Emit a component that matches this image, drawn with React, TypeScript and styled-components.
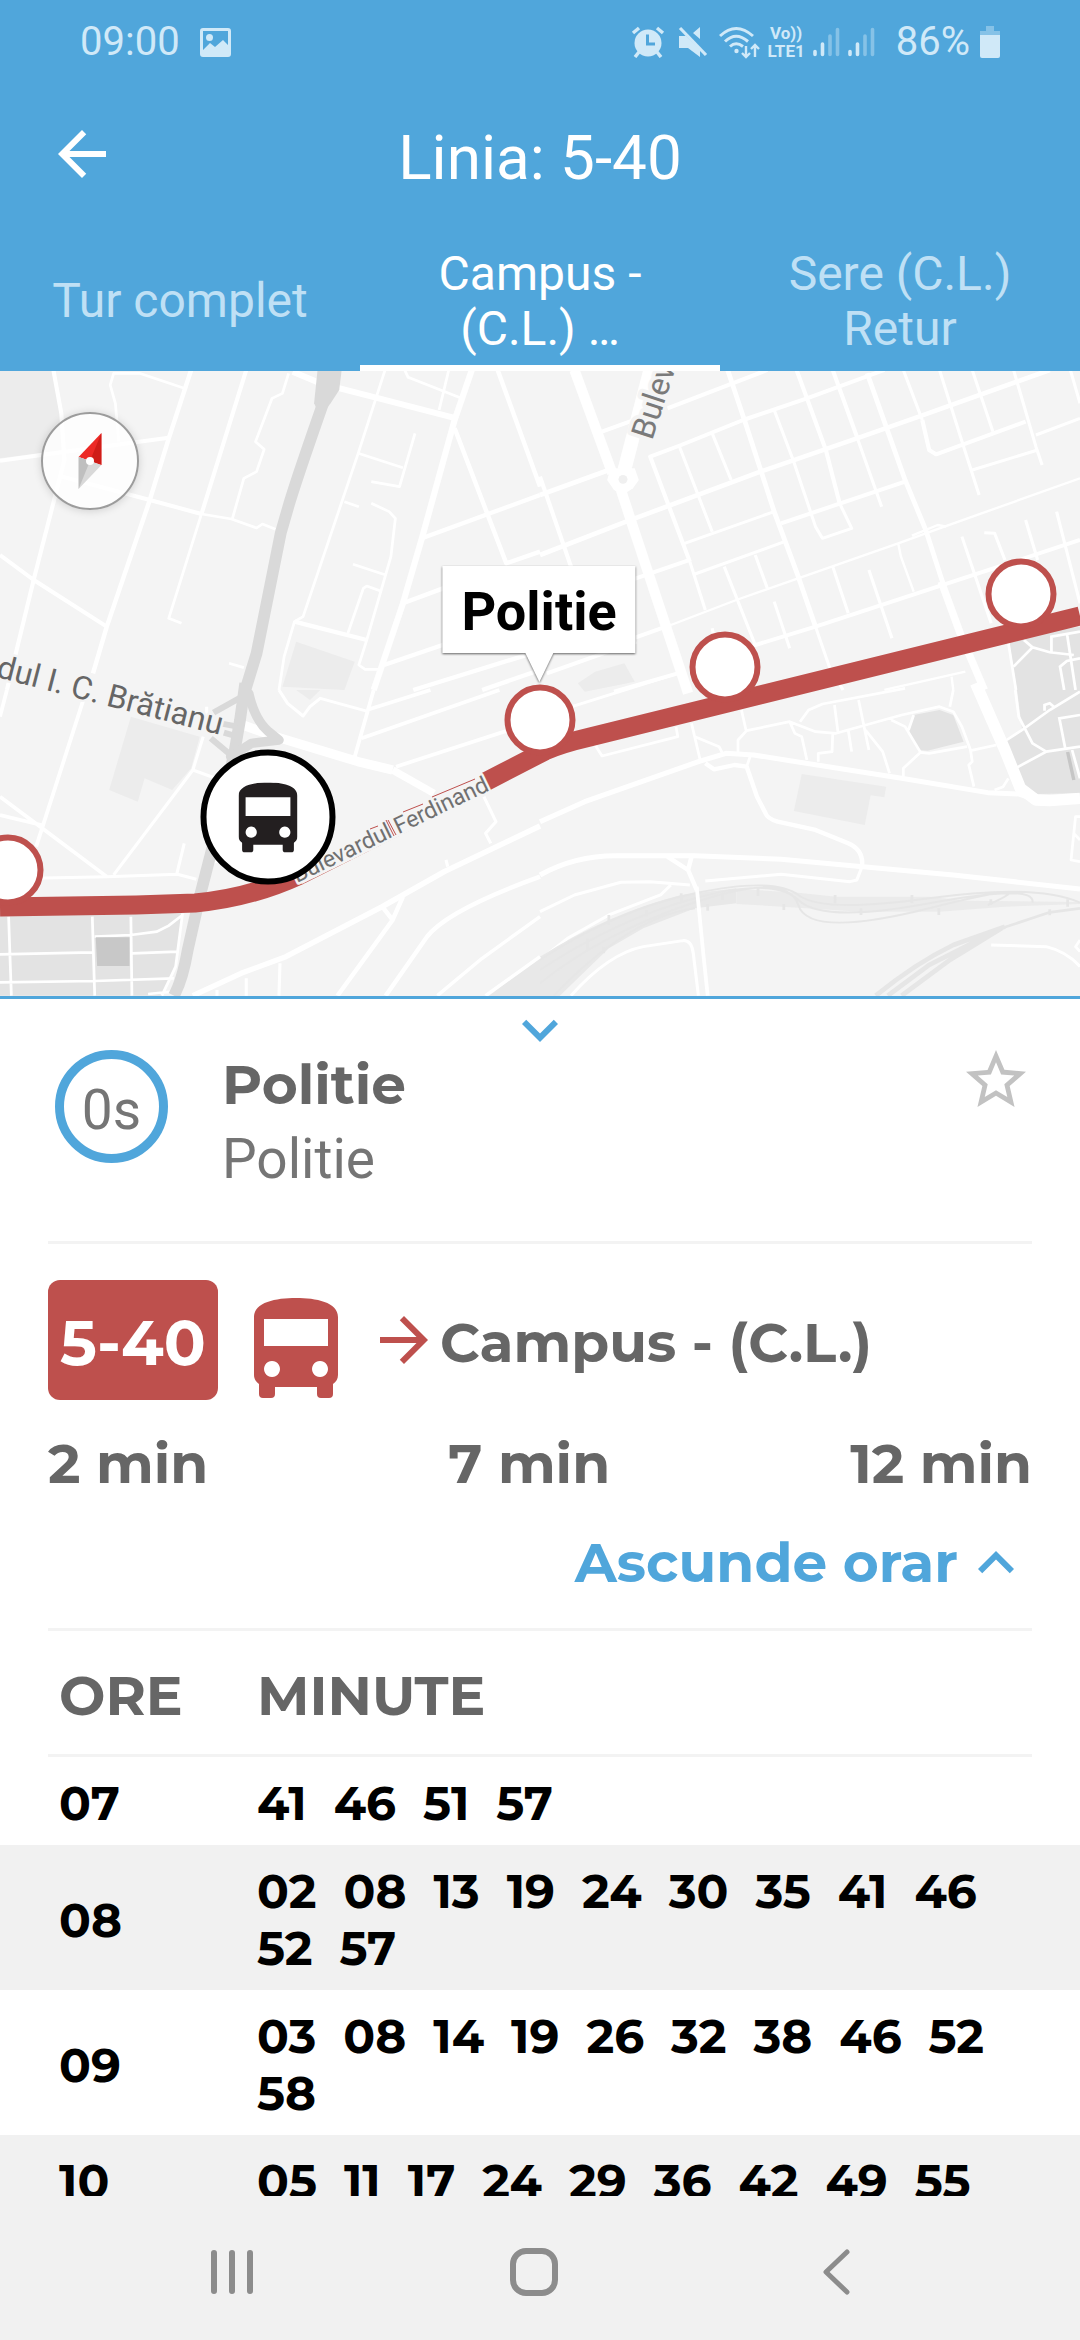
import React from "react";
import styled, { createGlobalStyle } from "styled-components";

const BLUE = "#50a6db";
const RED = "#be504d";
const GREY = "#666666";
const ICE = "#d0e9f8";
const MONT = `Montserrat, Inter, "Open Sans", sans-serif`;

const GlobalStyle = createGlobalStyle`
  *, *::before, *::after { box-sizing: border-box; }
  html, body { margin: 0; padding: 0; background: #fff; }
  body { font-family: Roboto, "Noto Sans", sans-serif; }
  button { margin: 0; padding: 0; border: 0; background: none; font: inherit; color: inherit; cursor: pointer; }
  h1, h2, p, ul { margin: 0; padding: 0; list-style: none; }
  svg { display: block; flex: none; }
`;

const Screen = styled.div`
  display: flex;
  flex-direction: column;
  height: 100vh;
  overflow: hidden;
  background: #fff;
`;

/* ---------- header ---------- */

const Header = styled.header`
  flex: none;
  background: ${BLUE};
  color: #fff;
`;

const StatusBar = styled.div`
  display: flex;
  align-items: center;
  height: 84px;
  padding: 0 80px;
  color: ${ICE};
  font-size: 40px;
  line-height: 48px;
`;

const Clock = styled.span`
  margin-right: 20px;
`;

const StatusIcons = styled.div`
  display: flex;
  align-items: center;
  gap: 8px;
  margin-left: auto;
`;

const VoLte = styled.div`
  display: flex;
  flex-direction: column;
  align-items: center;
  font-size: 17px;
  font-weight: 700;
  line-height: 18px;
`;

const Battery = styled.span`
  margin: 0 2px 0 13px;
`;

const AppBar = styled.div`
  display: grid;
  grid-template-columns: 72px 1fr 72px;
  align-items: center;
  height: 140px;
  padding: 0 46px;
`;

const Title = styled.h1`
  padding-top: 8px;
  font-size: 62px;
  font-weight: 400;
  line-height: 72px;
  text-align: center;
`;

const Tabs = styled.div`
  display: grid;
  grid-template-columns: repeat(3, 1fr);
`;

const Tab = styled.button<{ $active?: boolean }>`
  display: flex;
  align-items: center;
  justify-content: center;
  height: 147px;
  padding: 12px 40px 0;
  border-bottom: 6px solid ${(p) => (p.$active ? "#fff" : "transparent")};
  color: ${(p) => (p.$active ? "#fff" : "#bfe0f5")};
  font-size: 48px;
  line-height: 55px;
  text-align: center;
`;

/* ---------- map ---------- */

const MapBox = styled.section`
  position: relative;
  flex: none;
  width: 100%;
  aspect-ratio: 1080 / 628;
  overflow: hidden;
  border-bottom: 3px solid ${BLUE};
  background: #f4f4f4;
`;

const MapCanvas = styled.svg`
  width: 100%;
  height: 100%;
`;

const place = (x: number, y: number) =>
  `left: ${(x / 1080) * 100}%; top: ${(y / 625) * 100}%;`;

const StopPin = styled.button<{ $x: number; $y: number }>`
  position: absolute;
  ${(p) => place(p.$x, p.$y)}
  width: 71px;
  height: 71px;
  border: 6px solid ${RED};
  border-radius: 50%;
  background: #fff;
  transform: translate(-50%, -50%);
`;

const BusPin = styled.button<{ $x: number; $y: number }>`
  position: absolute;
  ${(p) => place(p.$x, p.$y)}
  display: flex;
  align-items: center;
  justify-content: center;
  width: 135px;
  height: 135px;
  border: 6px solid #000;
  border-radius: 50%;
  background: #fff;
  transform: translate(-50%, -50%);
`;

const Compass = styled.button<{ $x: number; $y: number }>`
  position: absolute;
  ${(p) => place(p.$x, p.$y)}
  display: flex;
  align-items: center;
  justify-content: center;
  width: 98px;
  height: 98px;
  border: 2px solid #9c9c9c;
  border-radius: 50%;
  background: rgba(255, 255, 255, 0.8);
  box-shadow: 0 1px 8px rgba(0, 0, 0, 0.15);
  transform: translate(-50%, -50%);
`;

const Callout = styled.div<{ $x: number; $y: number }>`
  position: absolute;
  ${(p) => place(p.$x, p.$y)}
  height: 87px;
  padding: 0 19px;
  background: #fff;
  color: #000;
  font-size: 54px;
  font-weight: 700;
  line-height: 92px;
  filter: drop-shadow(0 1px 1px rgba(0, 0, 0, 0.6));
  transform: translateX(-50%);

  &::after {
    content: "";
    position: absolute;
    top: 100%;
    left: 50%;
    border: 14px solid transparent;
    border-top: 29px solid #fff;
    border-bottom: 0;
    transform: translateX(-50%);
  }
`;

/* ---------- stop sheet ---------- */

const Sheet = styled.main`
  flex: 1;
  min-height: 0;
  overflow: hidden;
  background: #fff;
`;

const Handle = styled.button`
  display: flex;
  justify-content: center;
  width: 100%;
  padding-top: 19px;
`;

const StopHead = styled.div`
  display: flex;
  align-items: flex-start;
  gap: 54px;
  height: 199px;
  padding: 8px 54px 0 55px;
`;

const Ring = styled.div`
  display: flex;
  align-items: center;
  justify-content: center;
  width: 113px;
  height: 113px;
  padding-top: 6px;
  border: 9px solid ${BLUE};
  border-radius: 50%;
  color: #757575;
  font-size: 55px;
`;

const StopNames = styled.div`
  flex: 1;
`;

const StopName = styled.h2`
  color: ${GREY};
  font: 700 55px / 70px ${MONT};
`;

const StopStreet = styled.p`
  padding-top: 4px;
  color: #757575;
  font-size: 55px;
  line-height: 70px;
`;

const Rule = styled.hr`
  height: 3px;
  margin: 0 48px;
  border: 0;
  background: #f3f3f3;
`;

const Arrivals = styled.section`
  display: flex;
  flex-direction: column;
  gap: 29px;
  padding: 36px 48px 30px;
  color: ${GREY};
  font: 700 55px / 70px ${MONT};
`;

const LineRow = styled.div`
  display: flex;
  align-items: center;
`;

const Badge = styled.span`
  display: flex;
  align-items: center;
  justify-content: center;
  width: 170px;
  height: 120px;
  padding-top: 6px;
  border-radius: 12px;
  background: ${RED};
  color: #fff;
  font-size: 62px;
`;

const BusSlot = styled.span`
  padding: 16px 30px 0 36px;
`;

const Destination = styled.span`
  padding-top: 6px;
`;

const Waits = styled.ul`
  display: flex;
  justify-content: space-between;
`;

const Toggle = styled.button`
  display: flex;
  align-items: center;
  align-self: flex-end;
  gap: 20px;
  padding-right: 18px;
  color: ${BLUE};
`;

/* ---------- timetable ---------- */

const Table = styled.table`
  display: block;
  font-family: ${MONT};
  font-weight: 700;

  thead, tbody { display: block; }
  th, td { padding: 0; text-align: left; }
`;

const HeadRow = styled.tr`
  display: grid;
  grid-template-columns: 198px 1fr;
  align-items: center;
  height: 129px;
  margin: 0 48px;
  padding: 6px 0 0 11px;
  border-top: 3px solid #f3f3f3;
  border-bottom: 3px solid #f3f3f3;
  color: ${GREY};
  font-size: 55px;
  line-height: 70px;
`;

const HourRow = styled.tr`
  display: grid;
  grid-template-columns: 198px 1fr;
  align-items: center;
  padding: 18px 48px 13px 59px;
  color: #000;
  font-size: 47px;
  line-height: 57px;

  &:nth-child(even) { background: #f1f1f1; }
`;

const Minutes = styled.ul`
  display: flex;
  flex-wrap: wrap;
  column-gap: 27px;
`;

/* ---------- system navigation ---------- */

const NavBar = styled.nav`
  display: grid;
  grid-template-columns: repeat(3, 1fr);
  flex: none;
  height: 144px;
  padding: 0 93px 0 81px;
  background: #f1f1f1;
`;

const NavButton = styled.button`
  display: flex;
  align-items: center;
  justify-content: center;
  padding-top: 8px;
`;

/* ---------- icons ---------- */

const BusIcon = ({ width, color }: { width: number; color: string }) => (
  <svg width={width} height={Math.round((width * 100) / 84)} viewBox="0 0 84 100">
    <path
      fill={color}
      fillRule="evenodd"
      d="M42 0C62 0 84 4 84 19V77C84 81 82 84 79 86V96Q79 100 75 100H67Q63 100 63 96V89H21V96Q21 100 17 100H9Q5 100 5 96V86C2 84 0 81 0 77V19C0 4 22 0 42 0ZM10 21V48H74V21ZM18 63a8 8 0 1 0 .01 0ZM66 63a8 8 0 1 0 .01 0Z"
    />
  </svg>
);

const ArrowIcon = ({ color, back }: { color: string; back?: boolean }) => (
  <svg width="72" height="72" viewBox="0 0 24 24" fill={color}>
    <path
      d={
        back
          ? "M20 11H7.83l5.59-5.59L12 4l-8 8 8 8 1.41-1.41L7.83 13H20v-2z"
          : "M12 4l-1.41 1.41L16.17 11H4v2h12.17l-5.58 5.59L12 20l8-8z"
      }
    />
  </svg>
);

const ChevronIcon = ({ up }: { up?: boolean }) => (
  <svg width="36" height="24" viewBox="6 8 12 8" fill={BLUE}>
    <path
      d={
        up
          ? "M12 8l-6 6 1.41 1.41L12 10.83l4.59 4.58L18 14z"
          : "M16.59 8.59L12 13.17 7.41 8.59 6 10l6 6 6-6z"
      }
    />
  </svg>
);

const StarIcon = () => (
  <svg width="60" height="57" viewBox="2 2 20 19" fill="#c2c2c2">
    <path d="M22 9.24l-7.19-.62L12 2 9.19 8.63 2 9.24l5.46 4.73L5.82 21 12 17.27 18.18 21l-1.63-7.03L22 9.24zM12 15.4l-3.76 2.27 1-4.28-3.32-2.88 4.38-.38L12 6.1l1.71 4.04 4.38.38-3.32 2.88 1 4.28L12 15.4z" />
  </svg>
);

const PictureIcon = () => (
  <svg width="31" height="29" viewBox="0 0 31 29">
    <path
      fill={ICE}
      fillRule="evenodd"
      d="M3 0H28Q31 0 31 3V26Q31 29 28 29H3Q0 29 0 26V3Q0 0 3 0ZM3 3V22L10 15L15 19L23 12L28 17V3Z"
    />
    <circle cx="9.500" cy="9.500" r="3.500" fill={ICE} />
  </svg>
);

const AlarmIcon = () => (
  <svg width="34" height="32" viewBox="0 0 34 32">
    <circle cx="17" cy="17" r="13.500" fill={ICE} />
    <path d="M2 7 8 2M32 7 26 2M8 26 4 31M26 26 30 31" stroke={ICE} strokeWidth="3.500" />
    <path d="M16.500 8.500V18H24" fill="none" stroke={BLUE} strokeWidth="3" />
  </svg>
);

const MuteIcon = () => (
  <svg width="38" height="32" viewBox="-5 0 38 32">
    <path fill={ICE} d="M1 10H8L22 24V31L10 22H1ZM22 1V13L15 7Z" />
    <path d="M2 2 28 29" stroke={ICE} strokeWidth="3.200" />
  </svg>
);

const WifiIcon = () => (
  <svg width="41" height="33" viewBox="0 0 41 33" fill="none" stroke={ICE} strokeWidth="3">
    <path d="M1 10Q17-5 34 10M6 15.500Q17 5 29 15.500M11 20.500Q17 15 24 20.500" />
    <circle cx="17.500" cy="25" r="2.200" fill={ICE} stroke="none" />
    <path strokeWidth="2.400" d="M27 20V31M23 27L27 31L31 27M36 31V19M32 23L36 19L40 23" />
  </svg>
);

const SignalIcon = () => (
  <svg width="27" height="30" viewBox="0 0 27 30" strokeWidth="3.600" strokeLinecap="round">
    <path d="M2 24.500V27.500M9.500 17V27.500" stroke={ICE} />
    <path d="M17 9V27.500M24.500 2.500V27.500" stroke="#86c2e7" />
  </svg>
);

const BatteryIcon = () => (
  <svg width="20" height="32" viewBox="0 0 20 32">
    <path fill="#86c2e7" d="M6 0H14V5H20V10H0V5H6Z" />
    <path fill={ICE} d="M0 9H20V30Q20 32 18 32H2Q0 32 0 30Z" />
  </svg>
);

/* ---------- map drawing: four tiles, each in its own survey units ---------- */

const line = (pts: string) => "M" + pts;

const roadsNW: [number, string[]][] = [
  [12, ["155,0 178,130 187,270 100,620 20,960", "0,555 98,630 310,770", "0,272 120,255 490,203", "180,320 435,390 585,432", "715,0 585,432"]],
  [8, ["345,215 335,100 320,45 330,10 405,10 535,55", "585,432 490,745 527,760", "585,432 672,447 745,474 762,462 800,478", "838,10 820,70 790,85 742,215 767,238 745,305 708,325 675,445", "1118,0 1040,250 880,740 855,755 825,860 810,960", "1175,0 1185,22 1340,85", "1303,0 1275,120", "1040,250 1170,293", "1205,190 1160,350 1078,335", "1000,395 1042,410", "1078,400 1130,425 1148,445 1135,560 1065,810 1042,885 1060,898 1100,898", "1025,583 1120,615", "1010,790 1055,655 1065,648 1105,663", "665,880 708,893"]],
  [13, ["555,0 490,205 435,390 310,770 270,910", "1445,0 1568,350", "1320,175 1470,580 1568,545", "1225,505 1568,375", "1170,700 1300,650", "1115,885 1300,820", "1200,960 1560,845", "855,755 1065,810", "1400,960 1568,900"]],
  [18, ["850,5 930,40 1100,85 1325,145", "1370,0 1320,150 1225,505 1170,700 1085,960"]],
];

const roadsNE: [number, string[]][] = [
  [30, ["100,0 210,310", "235,360 270,470 430,970"]],
  [40, ["325,-20 245,300"]],
  [14, ["545,0 600,170 680,425 750,620 800,770", "950,10 1060,330 1120,480 1170,640", "0,375 200,300", "0,555 250,455 640,305 920,205 1100,140 1480,0"]],
  [22, ["1165,635 1220,790 1290,960"]],
  [12, ["180,185 300,140", "370,115 660,0", "435,575 320,260 410,225 590,150 775,85 1000,0", "700,460 1060,335", "610,830 800,770 1170,645 1568,510", "1110,150 1130,240 1150,253 1410,155", "435,570 270,628", "0,320 90,590", "270,805 380,765", "20,910 280,815", "215,965 400,910", "745,0 830,240 870,400", "850,0 920,200"]],
  [9, ["435,575 480,720", "405,230 500,485", "500,190 555,330", "420,520 680,425", "870,400 905,475 820,505 800,470 735,270 680,120", "920,200 992,410", "1055,0 1110,150", "1160,0 1230,230 1275,375", "1255,0 1315,185", "1375,0 1440,230 1458,285", "1255,300 1445,240", "1440,195 1568,145", "1540,0 1568,100", "450,612 710,515", "535,590 625,825", "625,555 660,655", "850,590 895,730", "955,600 1022,805", "1225,500 1310,760", "1290,488 1320,490 1350,570", "1410,450 1445,570", "1500,425 1568,700", "680,695 725,835", "800,770 840,890 880,960", "500,775 505,800"]],
  [7, ["380,765 570,690 1040,520 1160,475 1568,325", "1080,497 1155,465 1180,470", "1040,520 1048,560 1085,665", "1000,960 1235,905", "1195,920 1200,960"]],
];

const roadsSW: [number, string[]][] = [
  [11, ["0,80 20,0", "245,20 105,470", "0,320 110,405 310,560", "0,375 120,405", "1050,145 1450,0", "1065,60 1250,0", "1150,230 1568,90", "1085,0 1030,200"]],
  [9, ["95,565 310,560 515,553 570,568", "330,555 560,240 590,140", "560,240 640,270", "535,460 513,553", "600,50 600,80", "810,0 835,40 880,78 900,50 930,25 1070,65", "1405,320 1440,395 1410,430 1425,460", "813,820 810,917", "715,865 715,917", "630,900 630,917", "1295,510 1300,530", "610,520 640,510"]],
  [28, ["800,140 1040,215 1140,240", "705,105 800,140"]],
  [22, ["1140,240 1260,310"]],
  [16, ["560,917 700,850 830,800 1110,650 1290,545 1568,408"]],
  [13, ["1170,620 1140,690 980,917", "1110,650 1140,690", "1568,560 Q1300,660 1240,740 L1120,917"]],
  [10, ["1568,680 1400,805 1270,917", "1568,800 1410,917"]],
];

const blocksSW = ["25,680 33,917", "268,680 275,917", "380,680 383,917", "0,793 270,787", "385,790 515,785", "0,877 275,873 505,865", "275,740 380,735 455,725 490,707 530,675", "530,670 510,830 470,917", "430,912 500,905"];

const roadsSE: [number, string[]][] = [
  [15, ["0,395 130,335 460,215 540,190 620,195 1050,265 1300,308 1390,312 1440,330", "0,555 Q100,497 220,497 L450,497 700,508 1200,555 1568,597"]],
  [34, ["1265,-20 1350,180 1395,295 1440,330 1480,332 1568,325"]],
  [13, ["370,500 430,540 455,600", "440,500 430,540", "935,530 Q940,480 895,460 L800,420 690,395 Q660,385 655,370 L630,320 600,230 565,225 505,238 480,220"]],
  [9, ["0,665 100,615 235,577 320,575 435,585", "380,585 350,615 200,675 80,745 0,810", "480,573 700,553 900,575 920,570 935,530", "90,917 Q200,790 300,770 L415,752 Q440,750 445,790 L460,917", "1310,765 1470,770 Q1530,785 1568,830", "0,80 400,-50"]],
  [8, ["160,165 180,198 400,140 395,110", "440,100 465,210", "450,140 520,170 530,190", "575,190 575,150 600,122 725,95 800,125 860,130 1050,75 1160,50 1200,65 1225,110 1250,180 1255,215 1245,225 1260,290", "585,60 598,120", "725,95 740,130 760,140 775,210", "755,95 780,60 820,42 1060,-5", "855,45 865,125", "925,30 955,180", "895,120 905,185", "850,130 848,185 808,190 808,215", "945,120 995,185 1015,250", "1020,90 1060,110 1105,187 1130,190 1240,170", "1105,187 1055,235 1055,260", "1250,182 1325,165", "1200,0 1190,50", "1320,300 1345,290 1360,265", "610,200 600,230", "1085,75 1070,120", "1568,380 1555,380 1542,510 1568,515", "1550,430 1568,450", "1568,750 1555,770 1568,785"]],
];

const Roads = ({ roads }: { roads: [number, string[]][] }) => (
  <g fill="none" stroke="#fff" strokeLinejoin="round">
    {roads.map(([w, list]) => (
      <path key={w} strokeWidth={w} d={list.map(line).join("")} />
    ))}
  </g>
);

const MapDrawing = () => (
  <MapCanvas viewBox="0 371 1080 625" preserveAspectRatio="xMidYMid slice" aria-hidden="true">
    <g transform="translate(0 370) scale(.3444 .3333)">
      <path fill="#ececec" d="M0,0H155L175,130 185,240 0,265ZM860,815L1030,875 1000,960 820,950Z" />
      <Roads roads={roadsNW} />
      <path fill="none" stroke="#d9d9d9" strokeWidth="34" d="M945,80Q870,300 840,400L815,490 745,850 708,975" />
      <path fill="#d9d9d9" d="M922,0H992L985,60 960,100 930,140 912,100Z" />
    </g>
    <g transform="translate(540 370) scale(.3444 .3333)">
      <path fill="#ececec" d="M160,905L245,880 275,935 130,965 110,940Z" />
      <path fill="#e3e3e3" d="M1360,800L1568,770V962H1385Z" />
      <Roads roads={roadsNE} />
      <path fill="#fff" d="M205,295H275L287,330 270,355 240,375 215,360 195,330Z" />
      <circle cx="241" cy="328" r="13" fill="#f0f0f0" />
      <path fill="none" stroke="#fff" strokeWidth="8" d="M1405,810L1430,832 1480,847 1550,855M1430,832L1375,890M1485,850L1485,800 1568,785M1522,960L1510,890 1530,873 1568,865M1530,790L1555,960M1357,800L1382,960" />
    </g>
    <g transform="translate(540 690) scale(.3444 .3333)">
      <path fill="#e3e3e3" d="M1385,0H1568V310L1445,312 1400,290 1380,230 1355,150 1400,120ZM1085,75L1160,60 1200,75 1230,155 1125,182 1100,180 1072,125Z" />
      <path fill="#ececec" d="M760,252L1005,290 1000,322 960,316 943,405 737,363Z" />
      <Roads roads={roadsSE} />
      <g fill="none" stroke="#e6e6e6" strokeWidth="8">
        <path fill="#e8e8e8" stroke="none" d="M-170,935L0,800Q200,670 410,615L570,595 570,640 450,655 300,715 200,775 40,935Z" />
        <path fill="#ebebeb" stroke="none" d="M570,597L750,608 860,620H1130L1240,632 1568,636V642L1350,650 1160,665H930L750,653 570,642Z" />
        <path d="M0,810Q220,660 450,610T750,615T1130,625T1568,638M0,840Q220,690 450,625T750,630T1130,640T1430,638M0,880Q180,730 450,637T750,645T1130,655T1300,645M40,917Q260,680 450,655" strokeWidth="6" />
        <path d="M410,610V635M530,612V630M633,592V618M857,615V640M1080,615V640M487,642V662M708,642V660M932,655V675M1158,655V675M1309,628V645M1532,628V650M1480,658V676M200,675V705M310,660V680M138,745V780M185,770V790" />
        <path d="M975,917Q1090,820 1200,765L1350,710M1010,917L1130,825 1340,715M1050,917L1190,810 1340,715" strokeWidth="14" />
        <path d="M1340,715L1480,667 1568,655" />
      </g>
      <path stroke="#fff" strokeWidth="11" d="M455,590L475,800 487,917" fill="none" />
      <path fill="none" stroke="#fff" strokeWidth="8" d="M1355,150L1400,120 1480,60 1568,5M1380,0L1390,80 1430,160 1470,185 1380,235M1470,185L1568,170M1568,75L1508,85 1525,175M1545,180L1568,265M1465,62L1465,45 1480,40 1492,50" />
      <path stroke="#c6c6c6" strokeWidth="10" d="M1532,186L1550,270" />
    </g>
    <g transform="translate(0 690) scale(.3444 .3333)">
      <path fill="#ececec" d="M380,80L580,140 555,235 500,300 420,265 400,335 317,300ZM860,0H930L900,30Z" />
      <path fill="#e3e3e3" d="M0,670H530L510,830 470,917H0Z" />
      <path fill="#e8e8e8" d="M1568,800V917H1430Z" />
      <Roads roads={roadsSW} />
      <path fill="none" stroke="#fff" strokeWidth="8" d={blocksSW.map(line).join("")} />
      <path fill="#c8c8c8" d="M278,742H376V828H282Z" />
      <g fill="none" stroke="#d9d9d9">
        <path strokeWidth="34" d="M712,-20L697,90 680,190 630,420 580,620 545,780 Q530,870 505,917" />
        <path strokeWidth="28" strokeLinecap="round" strokeLinejoin="round" d="M722,10Q740,90 780,125L810,150 730,160 670,200" />
        <path strokeWidth="18" d="M620,68L720,10M612,145L670,195M640,100L690,110M650,128L690,140" />
      </g>
    </g>
    <path
      fill="none"
      stroke={RED}
      strokeWidth="19"
      d="M0,907L136,905 195,903Q250,898 300,875M300,875L487,781 545,751Q560,744 590,737L1080,616"
    />
    <g fontFamily="Roboto, sans-serif" fill={GREY} stroke="#f4f4f4" strokeWidth="8" paintOrder="stroke" strokeLinejoin="round">
      <path d="M297,874L485,782" strokeWidth="22" fill="none" />
      <text fontSize="32" textAnchor="end" transform="translate(220 735) rotate(14.500)" strokeWidth="5">Bulevardul I. C. Brătianu</text>
      <text fontSize="23" fill="#707070" transform="translate(297 883) rotate(-25.700)" strokeWidth="5">Bulevardul Ferdinand</text>
      <text fontSize="32" fill="#7a7a7a" transform="translate(652 441) rotate(-72)">Bulevardul</text>
    </g>
    <path stroke={RED} strokeWidth="1" d="M386,820L394,836M388,820L396,835M370,829L378,826M403,812L423,804M432,797L475,779" />
  </MapCanvas>
);

const stops = [
  { name: "Gara", x: 8, y: 499 },
  { name: "Politie", x: 540, y: 349 },
  { name: "Primarie", x: 725, y: 296 },
  { name: "Parc", x: 1021, y: 223 },
];

const timetable = [
  { hour: "07", minutes: ["41", "46", "51", "57"] },
  { hour: "08", minutes: ["02", "08", "13", "19", "24", "30", "35", "41", "46", "52", "57"] },
  { hour: "09", minutes: ["03", "08", "14", "19", "26", "32", "38", "46", "52", "58"] },
  { hour: "10", minutes: ["05", "11", "17", "24", "29", "36", "42", "49", "55"] },
];

export default function App() {
  return (
    <Screen>
      <GlobalStyle />
      <Header>
        <StatusBar>
          <Clock>09:00</Clock>
          <PictureIcon />
          <StatusIcons>
            <AlarmIcon />
            <MuteIcon />
            <WifiIcon />
            <VoLte>
              <span>Vo))</span>
              <span>LTE1</span>
            </VoLte>
            <SignalIcon />
            <SignalIcon />
            <Battery>86%</Battery>
            <BatteryIcon />
          </StatusIcons>
        </StatusBar>
        <AppBar>
          <button aria-label="Înapoi">
            <ArrowIcon color="#fff" back />
          </button>
          <Title>Linia: 5-40</Title>
        </AppBar>
        <Tabs role="tablist">
          <Tab role="tab">Tur complet</Tab>
          <Tab role="tab" aria-selected $active>
            Campus - (C.L.) …
          </Tab>
          <Tab role="tab">Sere (C.L.) Retur</Tab>
        </Tabs>
      </Header>

      <MapBox>
        <MapDrawing />
        {stops.map((s) => (
          <StopPin key={s.name} $x={s.x} $y={s.y} aria-label={s.name} />
        ))}
        <BusPin $x={268} $y={446} aria-label="Autobuz">
          <BusIcon width={59} color="#231f20" />
        </BusPin>
        <Callout $x={539} $y={195}>Politie</Callout>
        <Compass $x={90} $y={90} aria-label="Busolă">
          <svg width="24" height="58" viewBox="-12 -29 24 58">
            <path fill="#ec2a26" d="M11.400-28V4L-11.400-4Z" />
            <path fill="#cf1d18" d="M11.400-28V4L0 0Z" />
            <path fill="#d9d9d9" d="M-11.400-4L11.400 4L-11.400 28Z" />
            <path fill="#bfbfbf" d="M-11.400-4L0 0L-11.400 28Z" />
            <circle r="4" fill="#fff" />
          </svg>
        </Compass>
      </MapBox>

      <Sheet>
        <Handle aria-label="Restrânge">
          <ChevronIcon />
        </Handle>
        <StopHead>
          <Ring>0s</Ring>
          <StopNames>
            <StopName>Politie</StopName>
            <StopStreet>Politie</StopStreet>
          </StopNames>
          <button aria-label="Favorit">
            <StarIcon />
          </button>
        </StopHead>
        <Rule />
        <Arrivals>
          <LineRow>
            <Badge>5-40</Badge>
            <BusSlot>
              <BusIcon width={84} color={RED} />
            </BusSlot>
            <ArrowIcon color={RED} />
            <Destination>Campus - (C.L.)</Destination>
          </LineRow>
          <Waits>
            <li>2 min</li>
            <li>7 min</li>
            <li>12 min</li>
          </Waits>
          <Toggle>
            Ascunde orar
            <ChevronIcon up />
          </Toggle>
        </Arrivals>
        <Table>
          <thead>
            <HeadRow>
              <th scope="col">ORE</th>
              <th scope="col">MINUTE</th>
            </HeadRow>
          </thead>
          <tbody>
            {timetable.map((row) => (
              <HourRow key={row.hour}>
                <th scope="row">{row.hour}</th>
                <td>
                  <Minutes>
                    {row.minutes.map((m) => (
                      <li key={m}>{m}</li>
                    ))}
                  </Minutes>
                </td>
              </HourRow>
            ))}
          </tbody>
        </Table>
      </Sheet>

      <NavBar>
        <NavButton aria-label="Recente">
          <svg width="44" height="46" viewBox="0 0 44 46" stroke="#8c8c8c" strokeWidth="6" strokeLinecap="round">
            <path d="M4 4V42M22 4V42M40 4V42" />
          </svg>
        </NavButton>
        <NavButton aria-label="Acasă">
          <svg width="48" height="48" viewBox="0 0 48 48" fill="none" stroke="#8c8c8c" strokeWidth="6">
            <rect x="3" y="3" width="42" height="42" rx="13" />
          </svg>
        </NavButton>
        <NavButton aria-label="Înapoi la ecranul anterior">
          <svg width="28" height="46" viewBox="0 0 28 46" fill="none" stroke="#8c8c8c" strokeWidth="5" strokeLinecap="round" strokeLinejoin="round">
            <path d="M25 3L4 23L25 43" />
          </svg>
        </NavButton>
      </NavBar>
    </Screen>
  );
}
